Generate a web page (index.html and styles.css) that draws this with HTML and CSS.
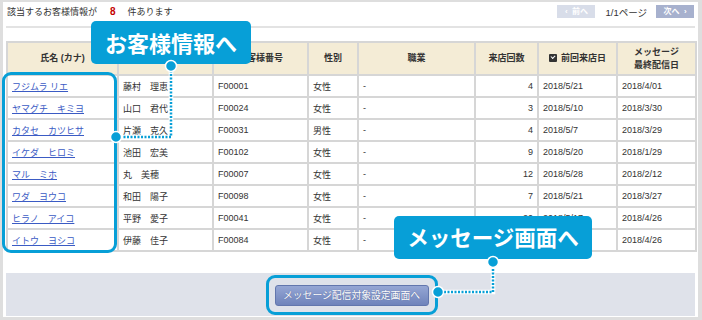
FILE: index.html
```html
<!DOCTYPE html>
<html lang="ja">
<head>
  <meta charset="UTF-8">
  <title>お客様一覧</title>
  <link rel="stylesheet" href="styles.css">
</head>
<body>
  <div class="panel">
    <div class="topbar">
      <p class="count">該当するお客様情報が<span class="num">8</span>件あります</p>
      <div class="pager">
        <span class="pbtn off">‹&nbsp;&nbsp;前へ</span>
        <span class="pages">1/1ページ</span>
        <span class="pbtn">次へ&nbsp;&nbsp;›</span>
      </div>
    </div>
    <div class="rule"></div>

    <table class="list">
      <colgroup>
        <col style="width:111px"><col style="width:95px"><col style="width:95px"><col style="width:50px">
        <col style="width:117px"><col style="width:63px"><col style="width:79px"><col style="width:79px">
      </colgroup>
      <thead>
        <tr>
          <th>氏名 (カナ)</th>
          <th>氏名</th>
          <th>お客様番号</th>
          <th>性別</th>
          <th>職業</th>
          <th>来店回数</th>
          <th><span class="check"></span>前回来店日</th>
          <th>メッセージ<br>最終配信日</th>
        </tr>
      </thead>
      <tbody>
        <tr><td><a href="#">フジムラ リエ</a></td><td>藤村　理恵</td><td>F00001</td><td>女性</td><td>-</td><td class="n">4</td><td>2018/5/21</td><td>2018/4/01</td></tr>
        <tr><td><a href="#">ヤマグチ　キミヨ</a></td><td>山口　君代</td><td>F00024</td><td>女性</td><td>-</td><td class="n">3</td><td>2018/5/10</td><td>2018/3/30</td></tr>
        <tr><td><a href="#">カタセ　カツヒサ</a></td><td>片瀬　克久</td><td>F00031</td><td>男性</td><td>-</td><td class="n">4</td><td>2018/5/7</td><td>2018/3/29</td></tr>
        <tr><td><a href="#">イケダ　ヒロミ</a></td><td>池田　宏美</td><td>F00102</td><td>女性</td><td>-</td><td class="n">9</td><td>2018/5/20</td><td>2018/1/29</td></tr>
        <tr><td><a href="#">マル　ミホ</a></td><td>丸　美穂</td><td>F00007</td><td>女性</td><td>-</td><td class="n">12</td><td>2018/5/28</td><td>2018/2/12</td></tr>
        <tr><td><a href="#">ワダ　ヨウコ</a></td><td>和田　陽子</td><td>F00098</td><td>女性</td><td>-</td><td class="n">7</td><td>2018/5/21</td><td>2018/3/27</td></tr>
        <tr><td><a href="#">ヒラノ　アイコ</a></td><td>平野　愛子</td><td>F00041</td><td>女性</td><td>-</td><td class="n">20</td><td>2018/5/17</td><td>2018/4/26</td></tr>
        <tr><td><a href="#">イトウ　ヨシコ</a></td><td>伊藤　佳子</td><td>F00084</td><td>女性</td><td>-</td><td class="n">5</td><td>2018/5/14</td><td>2018/4/26</td></tr>
      </tbody>
    </table>

    <div class="actions">
      <div class="ring">
        <button class="send">メッセージ配信対象設定画面へ</button>
      </div>
    </div>
  </div>

  <!-- guide overlays -->
  <div class="hl-col"></div>
  <div class="callout c1">お客様情報へ</div>
  <div class="callout c2">メッセージ画面へ</div>
  <svg class="links" width="702" height="320" viewBox="0 0 702 320">
    <g fill="none" stroke-linecap="butt">
      <polyline points="171,67 171,137 116,137" stroke="#fff" stroke-width="4.5"/>
      <polyline points="171,67 171,137 116,137" stroke="#079fd7" stroke-width="2.5" stroke-dasharray="2 1.5"/>
      <polyline points="493,262 493,292 438,292" stroke="#fff" stroke-width="4.5"/>
      <polyline points="493,262 493,292 438,292" stroke="#079fd7" stroke-width="2.5" stroke-dasharray="2 1.5"/>
    </g>
    <g fill="#079fd7" stroke="#fff" stroke-width="1.5">
      <circle cx="171" cy="66" r="5.5"/>
      <circle cx="116" cy="137" r="5.5"/>
      <circle cx="493" cy="262" r="5.5"/>
      <circle cx="438" cy="292" r="5.5"/>
    </g>
  </svg>
</body>
</html>
```

FILE: styles.css
```css
body {
  margin: 0;
  background: #dedede;
  font-family: 'Liberation Sans', 'Noto Sans CJK JP', sans-serif;
  color: #333;
  position: relative;
  width: 702px;
  height: 320px;
  overflow: hidden;
}

.panel {
  margin: 2px 4px 0 3px;
  height: 315px;
  padding: 0 3px;
  background: #fff;
  box-sizing: border-box;
}

.topbar {
  display: flex;
  align-items: center;
  justify-content: space-between;
  height: 19px;
}

.count {
  margin: 0 0 0 1px;
  font-size: 9px;
}

.num {
  color: #c40000;
  font-weight: bold;
  font-size: 10px;
  margin: 0 12px 0 13px;
}

.pager {
  display: flex;
  align-items: center;
  font-size: 9.5px;
  margin-right: 1px;
}

.pbtn {
  width: 38px;
  height: 13px;
  line-height: 13px;
  text-align: center;
  background: #a7b1ce;
  color: #fff;
  font-size: 8px;
  font-weight: bold;
}

.pbtn.off {
  background: #d8dde9;
}

.pages {
  margin: 0 9px 0 10px;
}

.rule {
  height: 2px;
  background: #e3e3e3;
  margin-top: 5px;
}

.list {
  margin-top: 13px;
  width: 689px;
  border-collapse: collapse;
  table-layout: fixed;
  font-size: 9px;
}

.list th,
.list td {
  border: 2px solid #d6d6d6;
  padding: 0 4px;
  overflow: hidden;
  white-space: nowrap;
}

.list th {
  background: #f4ecd6;
  height: 31px;
  font-weight: bold;
  text-align: center;
  line-height: 13px;
}

.list td {
  height: 20px;
}

.list td.n {
  text-align: right;
}

.list a {
  color: #3b5bc4;
}

.check {
  display: inline-block;
  width: 8px;
  height: 8px;
  background: #333;
  border-radius: 1px;
  margin-right: 4px;
  vertical-align: -1px;
  position: relative;
}

.check::after {
  content: '';
  position: absolute;
  left: 2px;
  top: 1px;
  width: 3px;
  height: 2px;
  border-left: 1.5px solid #fff;
  border-bottom: 1.5px solid #fff;
  transform: rotate(-45deg);
}

.actions {
  margin-top: 21px;
  height: 43px;
  background: #dfe2ea;
  display: flex;
  align-items: center;
  justify-content: center;
}

.ring {
  border: 3px solid #079fd7;
  border-radius: 9px;
  padding: 7px 6px 6px;
  margin-left: 2px;
}

.send {
  display: block;
  width: 154px;
  height: 21px;
  padding: 0;
  border: 1px solid #6276ad;
  border-radius: 3px;
  background: linear-gradient(#95a6d4, #6f83bb);
  color: #fff;
  font-family: 'Noto Sans CJK JP', sans-serif;
  font-size: 9.8px;
  text-shadow: 0 0 1px #4a5a8a;
}

.hl-col {
  position: absolute;
  left: 2px;
  top: 72px;
  width: 115px;
  height: 181px;
  border: 3px solid #079fd7;
  border-radius: 9px;
  box-sizing: border-box;
}

.callout {
  position: absolute;
  height: 43px;
  line-height: 42px;
  background: #079fd7;
  border-radius: 5px;
  color: #fff;
  font-family: 'Noto Sans CJK JP', sans-serif;
  font-weight: bold;
  font-size: 22px;
  text-align: center;
}

.c1 {
  left: 91px;
  top: 21px;
  width: 160px;
}

.c2 {
  left: 394px;
  top: 216px;
  width: 198px;
  font-size: 21.5px;
}

.links {
  position: absolute;
  left: 0;
  top: 0;
  pointer-events: none;
}
```
